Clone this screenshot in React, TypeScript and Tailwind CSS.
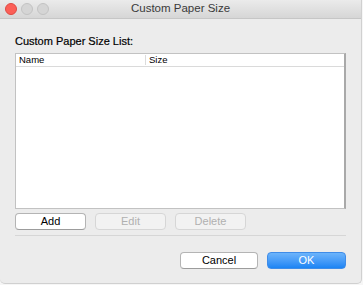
import React from 'react';

const Light = ({ red }: { red?: boolean }) => (
  <span
    className={`w-[12px] h-[12px] rounded-full border ${
      red ? 'bg-[#fc5f57] border-[#de4a43]' : 'bg-[#d5d5d5] border-[#c3c3c3]'
    }`}
  />
);

export default function App() {
  return (
    <div className="w-[363px] h-[285px] bg-[#f6f6f6] font-['Liberation_Sans',Arial,sans-serif]">
      <div className="w-[362px] h-[284px] bg-[#ececec] border-r border-b border-[#d0d0d0] rounded-br-[5px] rounded-bl-[5px] flex flex-col overflow-hidden">
        {/* Title bar */}
        <div className="relative h-[19px] shrink-0 bg-gradient-to-b from-[#ebebeb] to-[#d6d6d6] border-b border-[#c6c6c6] flex items-center px-[5px] gap-[4px]">
          <Light red />
          <Light />
          <Light />
          <div className="absolute inset-0 flex items-center justify-center text-[11.5px] text-[#3a3a3a] pointer-events-none">
            Custom Paper Size
          </div>
        </div>

        {/* Content */}
        <div className="flex flex-col pl-[15px] pr-[15px]">
          <div className="mt-[16px] h-[13px] leading-[13px] text-[11px] text-black [-webkit-text-stroke:0.2px_black]">
            Custom Paper Size List:
          </div>

          <div className="mt-[5px] h-[156px] bg-white border border-[#c2c2c2] border-r-[#a9a9a9] border-r-2 flex flex-col">
            <div className="h-[13px] flex items-center border-b border-[#dadada] text-[9.5px] text-black leading-none">
              <div className="w-[130px] pl-[3px] border-r border-[#dcdcdc] h-[10px] flex items-center">Name</div>
              <div className="pl-[3px]">Size</div>
            </div>
            <div className="flex-1" />
          </div>

          <div className="mt-[4px] flex gap-[9px]">
            <button className="w-[71px] h-[17px] rounded-[4px] bg-white border border-[#b4b4b4] border-b-[#9c9c9c] text-[11px] text-black leading-none">
              Add
            </button>
            <button className="w-[71px] h-[17px] rounded-[4px] bg-[#f2f2f2] border border-[#d6d6d6] text-[11px] text-[#b0b0b0] leading-none">
              Edit
            </button>
            <button className="w-[71px] h-[17px] rounded-[4px] bg-[#f2f2f2] border border-[#d6d6d6] text-[11px] text-[#b0b0b0] leading-none">
              Delete
            </button>
          </div>

          <div className="mt-[5px] h-px bg-[#d6d6d6]" />

          <div className="mt-[16px] flex justify-end gap-[9px]">
            <button className="w-[78px] h-[17px] rounded-[4px] bg-white border border-[#b4b4b4] border-b-[#9c9c9c] text-[11px] text-black leading-none">
              Cancel
            </button>
            <button className="w-[79px] h-[17px] rounded-[4px] bg-gradient-to-b from-[#6cb4fb] to-[#1a84f4] border border-[#3f8ce8] text-[11px] text-white leading-none">
              OK
            </button>
          </div>
        </div>
      </div>
    </div>
  );
}
